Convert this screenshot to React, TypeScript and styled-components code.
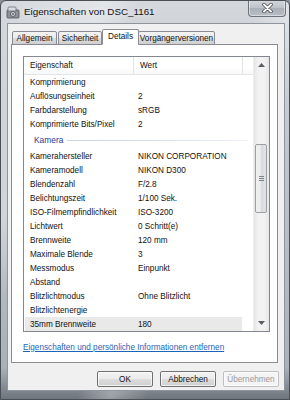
import React from 'react';
import styled, { createGlobalStyle } from 'styled-components';

const GlobalStyle = createGlobalStyle`
  html, body {
    margin: 0;
    padding: 0;
    background: #8a9099;
  }
  body {
    font-family: "Liberation Sans", Arial, sans-serif;
  }
`;

const Window = styled.div`
  width: 290px;
  height: 400px;
  box-sizing: border-box;
  display: flex;
  flex-direction: column;
  border: 1px solid #4a4e55;
  border-radius: 6px 6px 0 0;
  background:
    linear-gradient(115deg, rgba(255,255,255,0) 0%, rgba(255,255,255,0.35) 22%, rgba(255,255,255,0) 30%, rgba(255,255,255,0) 55%, rgba(255,255,255,0.3) 62%, rgba(255,255,255,0) 70%),
    linear-gradient(180deg, #d4d8dd 0%, #bfc5cc 40%, #aab1b9 92%, #6f757c 100%);
  overflow: hidden;
`;

const TitleBar = styled.div`
  height: 22px;
  flex: none;
  display: flex;
  align-items: flex-start;
`;

const TitleIcon = styled.div`
  width: 15px;
  height: 14px;
  margin: 4px 0 0 5px;
  display: flex;
`;

const TitleText = styled.div`
  margin: 5px 0 0 3px;
  font-size: 9.8px;
  color: #111;
  text-shadow: 0 0 6px rgba(255,255,255,0.9);
`;

const CloseButton = styled.div`
  margin-left: auto;
  margin-right: 3px;
  margin-top: -1px;
  width: 38px;
  height: 17px;
  box-sizing: border-box;
  border: 1px solid #6d737b;
  border-top: none;
  border-radius: 0 0 4px 4px;
  background: linear-gradient(180deg, #d5d9de 0%, #bcc2c9 50%, #a9b0b8 51%, #b8bec6 100%);
  box-shadow: inset 0 0 0 1px rgba(255,255,255,0.45);
  display: flex;
  align-items: center;
  justify-content: center;
`;

const Client = styled.div`
  flex: 1;
  margin: 0 4px 0 6px;
  background: #f0f0f0;
  border: 1px solid #8e949c;
  display: flex;
  flex-direction: column;
  padding: 0 6px 0 3px;
`;

const Body = styled.div`
  height: 366px;
  display: flex;
  flex-direction: column;
`;

const BottomFrame = styled.div`
  height: 9px;
  flex: none;
`;

const TabStrip = styled.div`
  display: flex;
  align-items: flex-end;
  height: 21px;
  padding-left: 1px;
  margin-bottom: -1px;
  position: relative;
  z-index: 1;
`;

const Tab = styled.div<{ $active?: boolean; $w: number }>`
  width: ${p => p.$w}px;
  box-sizing: border-box;
  height: ${p => (p.$active ? 16 : 14)}px;
  margin-right: ${p => (p.$active ? -1 : 1)}px;
  margin-left: ${p => (p.$active ? -1 : 0)}px;
  border: 1px solid #898c95;
  border-bottom: ${p => (p.$active ? '1px solid #fff' : '1px solid #898c95')};
  border-radius: 2px 2px 0 0;
  background: ${p =>
    p.$active ? '#fff' : 'linear-gradient(180deg, #f3f3f3 0%, #ebebeb 50%, #dddddd 51%, #cfcfcf 100%)'};
  font-size: 8.2px;
  color: #111;
  display: flex;
  align-items: center;
  justify-content: center;
  padding-bottom: ${p => (p.$active ? 2 : 0)}px;
`;

const Panel = styled.div`
  height: 319px;
  box-sizing: border-box;
  border: 1px solid #898c95;
  background: #fff;
  padding: 11px 7px 0 11px;
  display: flex;
  flex-direction: column;
`;

const ListView = styled.div`
  height: 277px;
  box-sizing: border-box;
  border: 1px solid #828790;
  display: flex;
`;

const ListContent = styled.div`
  flex: 1;
  display: flex;
  flex-direction: column;
  overflow: hidden;
`;

const Header = styled.div`
  height: 18px;
  flex: none;
  display: flex;
  border-bottom: 1px solid #e5e5e5;
  box-sizing: border-box;
  background: linear-gradient(180deg, #ffffff 0%, #ffffff 60%, #f7f8fa 100%);
`;

const HeaderCell = styled.div<{ $w?: number }>`
  width: ${p => (p.$w ? `${p.$w}px` : 'auto')};
  flex: ${p => (p.$w ? 'none' : 1)};
  border-right: 1px solid #e3e3e3;
  box-sizing: border-box;
  padding-left: 6px;
  font-size: 8.2px;
  color: #111;
  display: flex;
  align-items: center;
  &:last-child {
    border-right: none;
  }
`;

const Row = styled.div<{ $selected?: boolean }>`
  height: 14px;
  flex: none;
  display: flex;
  align-items: center;
  margin-left: 1px;
  width: 217px;
  background: ${p => (p.$selected ? '#e9e9e9' : 'transparent')};
  font-size: 8.2px;
  color: #111;
`;

const NameCell = styled.div`
  width: 108px;
  padding-left: 5px;
  box-sizing: border-box;
  white-space: nowrap;
`;

const ValueCell = styled.div`
  padding-left: 5px;
  white-space: nowrap;
`;

const Group = styled.div`
  height: 18px;
  flex: none;
  display: flex;
  align-items: center;
  padding-left: 10px;
  gap: 4px;
  font-size: 8.4px;
  color: #1f3a8f;
`;

const GroupLine = styled.div`
  width: 181px;
  height: 1px;
  background: linear-gradient(90deg, #c9d3e6 0%, #dfe5f0 70%, #eef1f6 100%);
`;

const ScrollBar = styled.div`
  width: 15px;
  flex: none;
  display: flex;
  flex-direction: column;
  background: linear-gradient(90deg, #e6e6e6 0%, #f2f2f2 30%, #f2f2f2 70%, #e6e6e6 100%);
  border-left: 1px solid #ececec;
`;

const ArrowButton = styled.div`
  height: 16px;
  flex: none;
  display: flex;
  align-items: center;
  justify-content: center;
`;

const Track = styled.div`
  flex: 1;
  display: flex;
  flex-direction: column;
`;

const Thumb = styled.div<{ $top: number; $h: number }>`
  margin-top: ${p => p.$top}px;
  height: ${p => p.$h}px;
  margin-left: 1px;
  margin-right: 2px;
  box-sizing: border-box;
  border: 1px solid #9b9fa5;
  border-radius: 2px;
  background: linear-gradient(90deg, #f1f1f1 0%, #e9e9ea 50%, #d8d9db 51%, #e3e4e6 100%);
  display: flex;
  align-items: center;
  justify-content: center;
`;

const Grip = styled.div`
  width: 5px;
  height: 6px;
  background: repeating-linear-gradient(180deg, #7d838a 0px, #7d838a 1px, transparent 1px, transparent 2px);
`;

const LinkRow = styled.div`
  height: 30px;
  display: flex;
  align-items: center;
`;

const RemoveLink = styled.span`
  font-size: 8.2px;
  color: #1d64b7;
  text-decoration: underline;
  cursor: pointer;
`;

const ButtonBar = styled.div`
  flex: 1;
  display: flex;
  align-items: flex-start;
  justify-content: flex-end;
  gap: 7px;
  padding-top: 8px;
  margin-right: -1px;
`;

const DialogButton = styled.div<{ $disabled?: boolean }>`
  width: 56px;
  height: 16px;
  box-sizing: border-box;
  border: 1px solid ${p => (p.$disabled ? '#bfbfbf' : '#707070')};
  border-radius: 2px;
  background: ${p =>
    p.$disabled
      ? '#f4f4f4'
      : 'linear-gradient(180deg, #f2f2f2 0%, #ebebeb 50%, #dddddd 51%, #cfcfcf 100%)'};
  box-shadow: inset 0 0 0 1px rgba(255,255,255,0.7);
  font-size: 8.2px;
  color: ${p => (p.$disabled ? '#9a9a9a' : '#111')};
  display: flex;
  align-items: center;
  justify-content: center;
`;

const topRows = [
  ['Komprimierung', ''],
  ['Auflösungseinheit', '2'],
  ['Farbdarstellung', 'sRGB'],
  ['Komprimierte Bits/Pixel', '2'],
];

const cameraRows = [
  ['Kamerahersteller', 'NIKON CORPORATION'],
  ['Kameramodell', 'NIKON D300'],
  ['Blendenzahl', 'F/2.8'],
  ['Belichtungszeit', '1/100 Sek.'],
  ['ISO-Filmempfindlichkeit', 'ISO-3200'],
  ['Lichtwert', '0 Schritt(e)'],
  ['Brennweite', '120 mm'],
  ['Maximale Blende', '3'],
  ['Messmodus', 'Einpunkt'],
  ['Abstand', ''],
  ['Blitzlichtmodus', 'Ohne Blitzlicht'],
  ['Blitzlichtenergie', ''],
  ['35mm Brennweite', '180'],
];

const tabs = [
  { label: 'Allgemein', w: 45 },
  { label: 'Sicherheit', w: 44 },
  { label: 'Details', w: 37, active: true },
  { label: 'Vorgängerversionen', w: 77 },
];

const CameraIcon = () => (
  <svg width="15" height="14" viewBox="0 0 15 14">
    <rect x="1" y="5" width="12" height="8" rx="1" fill="#8d9299" stroke="#4d5157" strokeWidth="0.8" />
    <rect x="2" y="2" width="8" height="4" rx="1" fill="#d9dcdf" stroke="#5d6168" strokeWidth="0.7" />
    <circle cx="7" cy="9" r="2.4" fill="#e4e6e9" stroke="#44474c" strokeWidth="0.8" />
    <circle cx="7" cy="9" r="1" fill="#5a5e64" />
  </svg>
);

export default function App() {
  return (
    <>
      <GlobalStyle />
      <Window>
        <TitleBar>
          <TitleIcon>
            <CameraIcon />
          </TitleIcon>
          <TitleText>Eigenschaften von DSC_1161</TitleText>
          <CloseButton>
            <svg width="11" height="10" viewBox="0 0 11 10">
              <path d="M2 1.5 L9 8.5 M9 1.5 L2 8.5" stroke="#3d4148" strokeWidth="3.4" strokeLinecap="round" />
              <path d="M2 1.5 L9 8.5 M9 1.5 L2 8.5" stroke="#ffffff" strokeWidth="2" strokeLinecap="round" />
            </svg>
          </CloseButton>
        </TitleBar>
        <Client>
          <Body>
            <TabStrip>
              {tabs.map(t => (
                <Tab key={t.label} $w={t.w} $active={t.active}>
                  {t.label}
                </Tab>
              ))}
            </TabStrip>
            <Panel>
              <ListView>
                <ListContent>
                  <Header>
                    <HeaderCell $w={110}>Eigenschaft</HeaderCell>
                    <HeaderCell $w={109}>Wert</HeaderCell>
                    <HeaderCell />
                  </Header>
                  {topRows.map(([n, v]) => (
                    <Row key={n}>
                      <NameCell>{n}</NameCell>
                      <ValueCell>{v}</ValueCell>
                    </Row>
                  ))}
                  <Group>
                    Kamera
                    <GroupLine />
                  </Group>
                  {cameraRows.map(([n, v], i) => (
                    <Row key={n} $selected={i === cameraRows.length - 1}>
                      <NameCell>{n}</NameCell>
                      <ValueCell>{v}</ValueCell>
                    </Row>
                  ))}
                </ListContent>
                <ScrollBar>
                  <ArrowButton>
                    <svg width="7" height="4" viewBox="0 0 7 4">
                      <path d="M0 4 L3.5 0 L7 4 Z" fill="#5a5e64" />
                    </svg>
                  </ArrowButton>
                  <Track>
                    <Thumb $top={71} $h={69}>
                      <Grip />
                    </Thumb>
                  </Track>
                  <ArrowButton>
                    <svg width="7" height="4" viewBox="0 0 7 4">
                      <path d="M0 0 L7 0 L3.5 4 Z" fill="#5a5e64" />
                    </svg>
                  </ArrowButton>
                </ScrollBar>
              </ListView>
              <LinkRow>
                <RemoveLink>Eigenschaften und persönliche Informationen entfernen</RemoveLink>
              </LinkRow>
            </Panel>
            <ButtonBar>
              <DialogButton>OK</DialogButton>
              <DialogButton>Abbrechen</DialogButton>
              <DialogButton $disabled>Übernehmen</DialogButton>
            </ButtonBar>
          </Body>
        </Client>
        <BottomFrame />
      </Window>
    </>
  );
}
